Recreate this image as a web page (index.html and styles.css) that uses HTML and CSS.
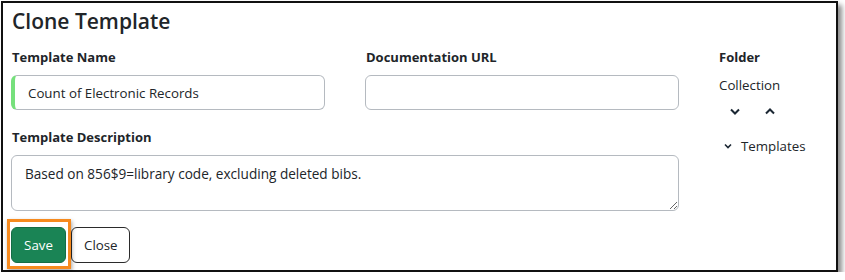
FILE: index.html
```html
<!DOCTYPE html>
<html lang="en">
<head>
  <meta charset="UTF-8" />
  <title>Clone Template</title>
  <link rel="stylesheet" href="styles.css">
</head>
<body>
  <div class="frame">
    <h2 class="title">Clone Template</h2>

    <div class="form-grid">
      <div class="field name">
        <label>Template Name</label>
        <input class="input valid" type="text" value="Count of Electronic Records">
      </div>
      <div class="field url">
        <label>Documentation URL</label>
        <input class="input" type="text" value="">
      </div>
      <div class="folder">
        <label>Folder</label>
        <div class="tree-root">Collection</div>
        <div class="tree-actions">
          <span class="chev">
            <svg width="10" height="7" viewBox="0 0 10 7"><path d="M1 1.5 L5 5.5 L9 1.5" /></svg>
          </span>
          <span class="chev">
            <svg width="10" height="7" viewBox="0 0 10 7"><path d="M1 5.5 L5 1.5 L9 5.5" /></svg>
          </span>
        </div>
        <div class="tree-node">
          <svg width="8" height="6" viewBox="0 0 8 6"><path d="M1 1.5 L4 4.5 L7 1.5" /></svg>
          <span>Templates</span>
        </div>
      </div>
      <div class="field wide">
        <label>Template Description</label>
        <textarea class="input area">Based on 856$9=library code, excluding deleted bibs.</textarea>
      </div>
    </div>

    <div class="actions">
      <button class="btn btn-save">Save</button>
      <button class="btn btn-close">Close</button>
    </div>
  </div>
</body>
</html>
```

FILE: styles.css
```css
html, body {
  margin: 0;
  padding: 0;
  background: #fff;
  font-family: 'Open Sans', 'Noto Sans', sans-serif;
  color: #212529;
  overflow: hidden;
}
*, *::before, *::after {
  box-sizing: border-box;
}

.frame {
  margin: 1px 0 0 1px;
  width: 837px;
  height: 271px;
  border: 2px solid #111;
  padding: 5px 8px 0 8px;
  box-shadow: 4px 4px 5px rgba(0, 0, 0, 0.45);
}

.title {
  margin: 0 0 0 1px;
  font-size: 21px;
  font-weight: 600;
  line-height: 27px;
}

/* 2 cot nhap lieu + cot thu muc */
.form-grid {
  display: grid;
  grid-template-columns: 314px 314px 1fr;
  column-gap: 40px;
  margin-top: 12px;
}
.field.name {
  grid-column: 1;
  grid-row: 1;
}
.field.url {
  grid-column: 2;
  grid-row: 1;
}
.folder {
  grid-column: 3;
  grid-row: 1 / 3;
  font-size: 13.3px;
}
.field.wide {
  grid-column: 1 / 3;
  grid-row: 2;
  margin-top: 17px;
}

.field label,
.folder label {
  display: block;
  font-size: 13px;
  font-weight: 700;
  line-height: 20px;
  margin: 0 0 8px 1px;
}
.folder label {
  margin-left: 0;
}

.input {
  display: block;
  width: 100%;
  height: 35px;
  border: 1px solid #b5bac0;
  border-radius: 6px;
  padding: 0 13px;
  font-family: inherit;
  font-size: 13.3px;
  color: #212529;
  background: #fff;
}
.input.valid {
  border-left: 4px solid #76e07c;
  padding-left: 13px;
}
.input.area {
  height: 56px;
  padding: 8px 13px;
  line-height: 19px;
  font-size: 13.6px;
}

.tree-root {
  line-height: 20px;
  margin-top: 1px;
}
.tree-actions {
  display: flex;
  gap: 25px;
  padding-left: 11px;
  margin-top: 10px;
  height: 12px;
  align-items: center;
}
.chev svg,
.tree-node svg {
  display: block;
  fill: none;
  stroke: #1b2733;
  stroke-width: 2;
}
.tree-node {
  display: flex;
  align-items: center;
  gap: 9px;
  margin-top: 19px;
  padding-left: 5px;
  line-height: 20px;
}
.tree-node svg {
  stroke-width: 1.6;
}

.actions {
  display: flex;
  gap: 5px;
  margin-top: 16px;
}

.btn {
  height: 36px;
  border-radius: 6px;
  font-family: inherit;
  font-size: 13.3px;
  padding: 0 12px;
  cursor: pointer;
}
.btn-save {
  position: relative;
  width: 55px;
  background: #1a8455;
  border: 1px solid #146c45;
  color: #fff;
}
/* khung cam danh dau nut */
.btn-save::after {
  content: "";
  position: absolute;
  top: -9px;
  right: -6px;
  bottom: -7px;
  left: -5px;
  border: 3px solid #f68a1e;
  box-shadow: 1px 2px 4px rgba(0, 0, 0, 0.35);
}
.btn-close {
  width: 59px;
  background: #fff;
  border: 1px solid #2b2b2b;
  color: #212529;
}
```
